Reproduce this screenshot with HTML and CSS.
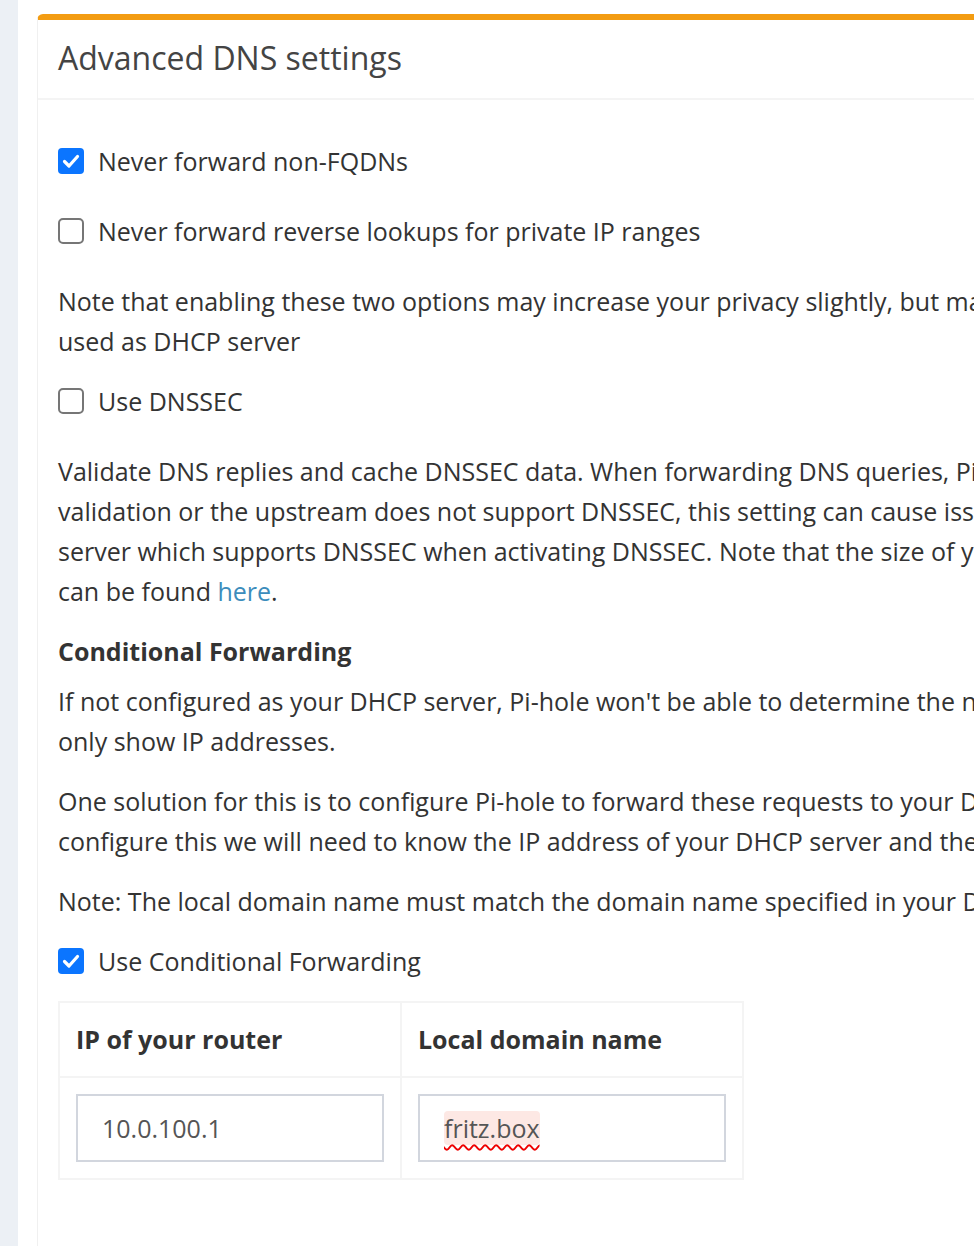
FILE: index.html
```html
<!DOCTYPE html>
<html lang="en">
<head>
<meta charset="utf-8">
<title>Advanced DNS settings</title>
<link rel="stylesheet" href="styles.css">
</head>
<body>
<div class="page">
  <div class="strip"></div>
  <div class="content">
    <div class="card">
      <div class="card-header">
        <h3 class="card-title">Advanced DNS settings</h3>
      </div>
      <div class="card-body">
        <div class="check-row">
          <span class="cb cb-on"><svg viewBox="0 0 26 26" width="26" height="26"><rect x="0" y="0" width="26" height="26" rx="4" fill="#0b75ff"/><path d="M6.5 13.5 L11 18 L19.5 8.5" fill="none" stroke="#fff" stroke-width="3.2" stroke-linecap="round" stroke-linejoin="round"/></svg></span>
          <span class="label">Never forward non-FQDNs</span>
        </div>
        <div class="check-row">
          <span class="cb"><svg viewBox="0 0 26 26" width="26" height="26"><rect x="1" y="1" width="24" height="24" rx="4" fill="#fff" stroke="#767676" stroke-width="2"/></svg></span>
          <span class="label">Never forward reverse lookups for private IP ranges</span>
        </div>
        <p>Note that enabling these two options may increase your privacy slightly, but may also prevent you from being able to access local hostnames if the Pi-hole is not<br>used as DHCP server</p>
        <div class="check-row">
          <span class="cb"><svg viewBox="0 0 26 26" width="26" height="26"><rect x="1" y="1" width="24" height="24" rx="4" fill="#fff" stroke="#767676" stroke-width="2"/></svg></span>
          <span class="label">Use DNSSEC</span>
        </div>
        <p>Validate DNS replies and cache DNSSEC data. When forwarding DNS queries, Pi-hole requests the DNSSEC records needed to validate the replies. If a domain fails<br>validation or the upstream does not support DNSSEC, this setting can cause issues resolving domains. Use an upstream DNS<br>server which supports DNSSEC when activating DNSSEC. Note that the size of your log might increase significantly when enabling DNSSEC. A DNSSEC resolver test<br>can be found <a href="#">here</a>.</p>
        <h4 class="section-title">Conditional Forwarding</h4>
        <p>If not configured as your DHCP server, Pi-hole won't be able to determine the names of devices on your local network. As a result, tables such as Top Clients will<br>only show IP addresses.</p>
        <p>One solution for this is to configure Pi-hole to forward these requests to your DHCP server (most likely your router), but only for devices on your home network. To<br>configure this we will need to know the IP address of your DHCP server and the name of your local network.</p>
        <p>Note: The local domain name must match the domain name specified in your DHCP server, likely found within the DHCP settings.</p>
        <div class="check-row last">
          <span class="cb cb-on"><svg viewBox="0 0 26 26" width="26" height="26"><rect x="0" y="0" width="26" height="26" rx="4" fill="#0b75ff"/><path d="M6.5 13.5 L11 18 L19.5 8.5" fill="none" stroke="#fff" stroke-width="3.2" stroke-linecap="round" stroke-linejoin="round"/></svg></span>
          <span class="label">Use Conditional Forwarding</span>
        </div>
        <table class="cf-table">
          <thead>
            <tr><th>IP of your router</th><th>Local domain name</th></tr>
          </thead>
          <tbody>
            <tr>
              <td><div class="input">10.0.100.1</div></td>
              <td><div class="input"><span class="misspelled">fritz.box</span></div></td>
            </tr>
          </tbody>
        </table>
      </div>
    </div>
  </div>
</div>
</body>
</html>
```

FILE: styles.css
```css
html, body {
  margin: 0;
  padding: 0;
  background: #fff;
  overflow: hidden;
}
body {
  font-family: "Open Sans", "Noto Sans", "Liberation Sans", sans-serif;
  font-size: 25px;
  color: #333;
}
.page {
  display: flex;
  width: 974px;
  height: 1246px;
  overflow: hidden;
}
.strip {
  width: 18px;
  flex: 0 0 18px;
  background: #ecf0f5;
}
.content {
  flex: 1;
  min-width: 0;
  padding: 14px 0 0 19px;
}
.card {
  width: 1200px;
  min-height: 1300px;
  background: #fff;
  border-top: 6px solid #f39c12;
  border-left: 1px solid #f0f0f0;
  border-radius: 6px 0 0 0;
}
.card-header {
  height: 80px;
  box-sizing: border-box;
  padding: 18px 20px 0 20px;
  border-bottom: 2px solid #f4f4f4;
}
.card-title {
  margin: 0;
  font-size: 32px;
  font-weight: 400;
  line-height: 40px;
  color: #444;
}
.card-body {
  padding: 41px 20px 0 20px;
}
.check-row {
  display: flex;
  align-items: center;
  gap: 14px;
  line-height: 40px;
  margin-bottom: 30px;
  white-space: nowrap;
}
.check-row.last {
  margin-bottom: 20px;
}
.cb {
  width: 26px;
  height: 26px;
  flex: 0 0 26px;
  display: block;
}
.cb svg {
  display: block;
}
p {
  margin: 0 0 20px;
  line-height: 40px;
  white-space: nowrap;
}
a {
  color: #3c8dbc;
  text-decoration: none;
}
.section-title {
  margin: 0 0 10px;
  font-size: 25px;
  font-weight: 700;
  line-height: 40px;
}
.cf-table {
  border-collapse: collapse;
  width: 686px;
  table-layout: fixed;
}
.cf-table th,
.cf-table td {
  border: 2px solid #f4f4f4;
  padding: 16px;
  text-align: left;
  vertical-align: middle;
}
.cf-table th {
  font-weight: 700;
  line-height: 41px;
}
.input {
  box-sizing: border-box;
  height: 68px;
  border: 2px solid #d2d6de;
  padding: 0 24px;
  display: flex;
  align-items: center;
  color: #555;
  font-size: 25px;
}
.misspelled {
  background: #fde8e4;
  border-radius: 4px;
  text-decoration: underline wavy #e00;
  text-decoration-thickness: 2px;
  text-underline-offset: 6px;
}
```
